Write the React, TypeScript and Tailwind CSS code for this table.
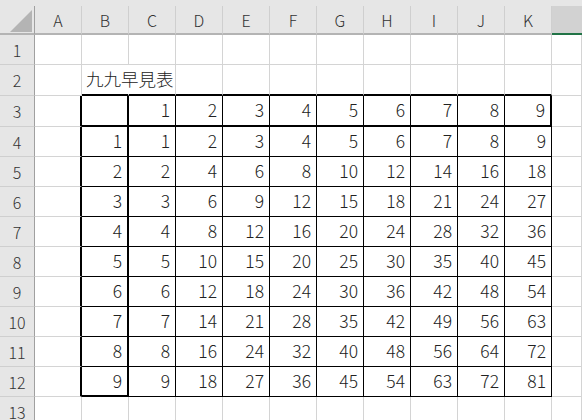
const COLS = ['A', 'B', 'C', 'D', 'E', 'F', 'G', 'H', 'I', 'J', 'K'];
const ROWS = [1, 2, 3, 4, 5, 6, 7, 8, 9, 10, 11, 12, 13];

// column index: 0 = A, 1 = B ... 10 = K, 11 = L (partly visible)
const inTable = (r: number, c: number) => r >= 3 && r <= 12 && c >= 1 && c <= 10;

const rightBorder = (r: number, c: number) => {
  if (r === 2 && c === 1) return 'border-r border-r-white';
  if (r >= 3 && r <= 12) {
    if (c === 0 || c === 1) return 'border-r-2 border-r-black';
    if (c === 10) return r === 3 ? 'border-r-2 border-r-black' : 'border-r border-r-black';
    if (c > 1 && c < 10) return 'border-r border-r-black';
  }
  return 'border-r border-r-[#d4d4d4]';
};

const bottomBorder = (r: number, c: number) => {
  if (c >= 1 && c <= 10) {
    if (r === 2 || r === 3) return 'border-b-2 border-b-black';
    if (r === 12) return c === 1 ? 'border-b-2 border-b-black' : 'border-b border-b-black';
    if (r > 3 && r < 12) return 'border-b border-b-black';
  }
  return 'border-b border-b-[#d4d4d4]';
};

const cellText = (r: number, c: number) => {
  if (!inTable(r, c)) return '';
  if (r === 3) return c === 1 ? '' : String(c - 1);
  if (c === 1) return String(r - 3);
  return String((r - 3) * (c - 1));
};

export default function App() {
  return (
    <div
      className="w-[582px] h-[420px] overflow-hidden bg-white text-[#222] font-light"
      style={{ fontFamily: '"Noto Sans CJK JP", "Noto Sans", sans-serif' }}
    >
      <div className="h-[6px] bg-[#e6e6e6]" />
      <div className="grid grid-cols-[35px_repeat(11,47px)_30px] grid-rows-[29px_30px_31px_31px_repeat(10,30px)]">
        {/* corner */}
        <div className="bg-[#e6e6e6] border-r border-r-[#a0a0a0] border-b-2 border-b-[#b4b4b4] pl-[10px] pt-[4px]">
          <svg width="22" height="22" viewBox="0 0 22 22">
            <polygon points="22,0 22,22 0,22" fill="#b4b4b4" />
          </svg>
        </div>
        {COLS.map((l) => (
          <div
            key={l}
            className="flex items-center justify-center bg-[#e6e6e6] border-r border-r-[#cfcfcf] border-b-2 border-b-[#b4b4b4] text-[16px] text-[#333]"
          >
            {l}
          </div>
        ))}
        <div className="bg-[#d2d2d2] border-b-2 border-b-[#217346]" />

        {ROWS.map((r) => (
          <div key={r} className="contents">
            <div className="flex items-center justify-center bg-[#e6e6e6] border-r border-r-[#a0a0a0] border-b border-b-[#cfcfcf] text-[16px] text-[#333]">
              {r}
            </div>
            {Array.from({ length: 12 }, (_, c) => (
              <div
                key={c}
                className={`flex items-center ${c === 1 && r === 2 ? 'relative z-10 justify-start pl-[4px] overflow-visible whitespace-nowrap' : 'justify-end pr-[5px]'} ${rightBorder(r, c)} ${bottomBorder(r, c)} text-[17.5px]`}
              >
                {r === 2 && c === 1 ? '九九早見表' : cellText(r, c)}
              </div>
            ))}
          </div>
        ))}
      </div>
    </div>
  );
}
